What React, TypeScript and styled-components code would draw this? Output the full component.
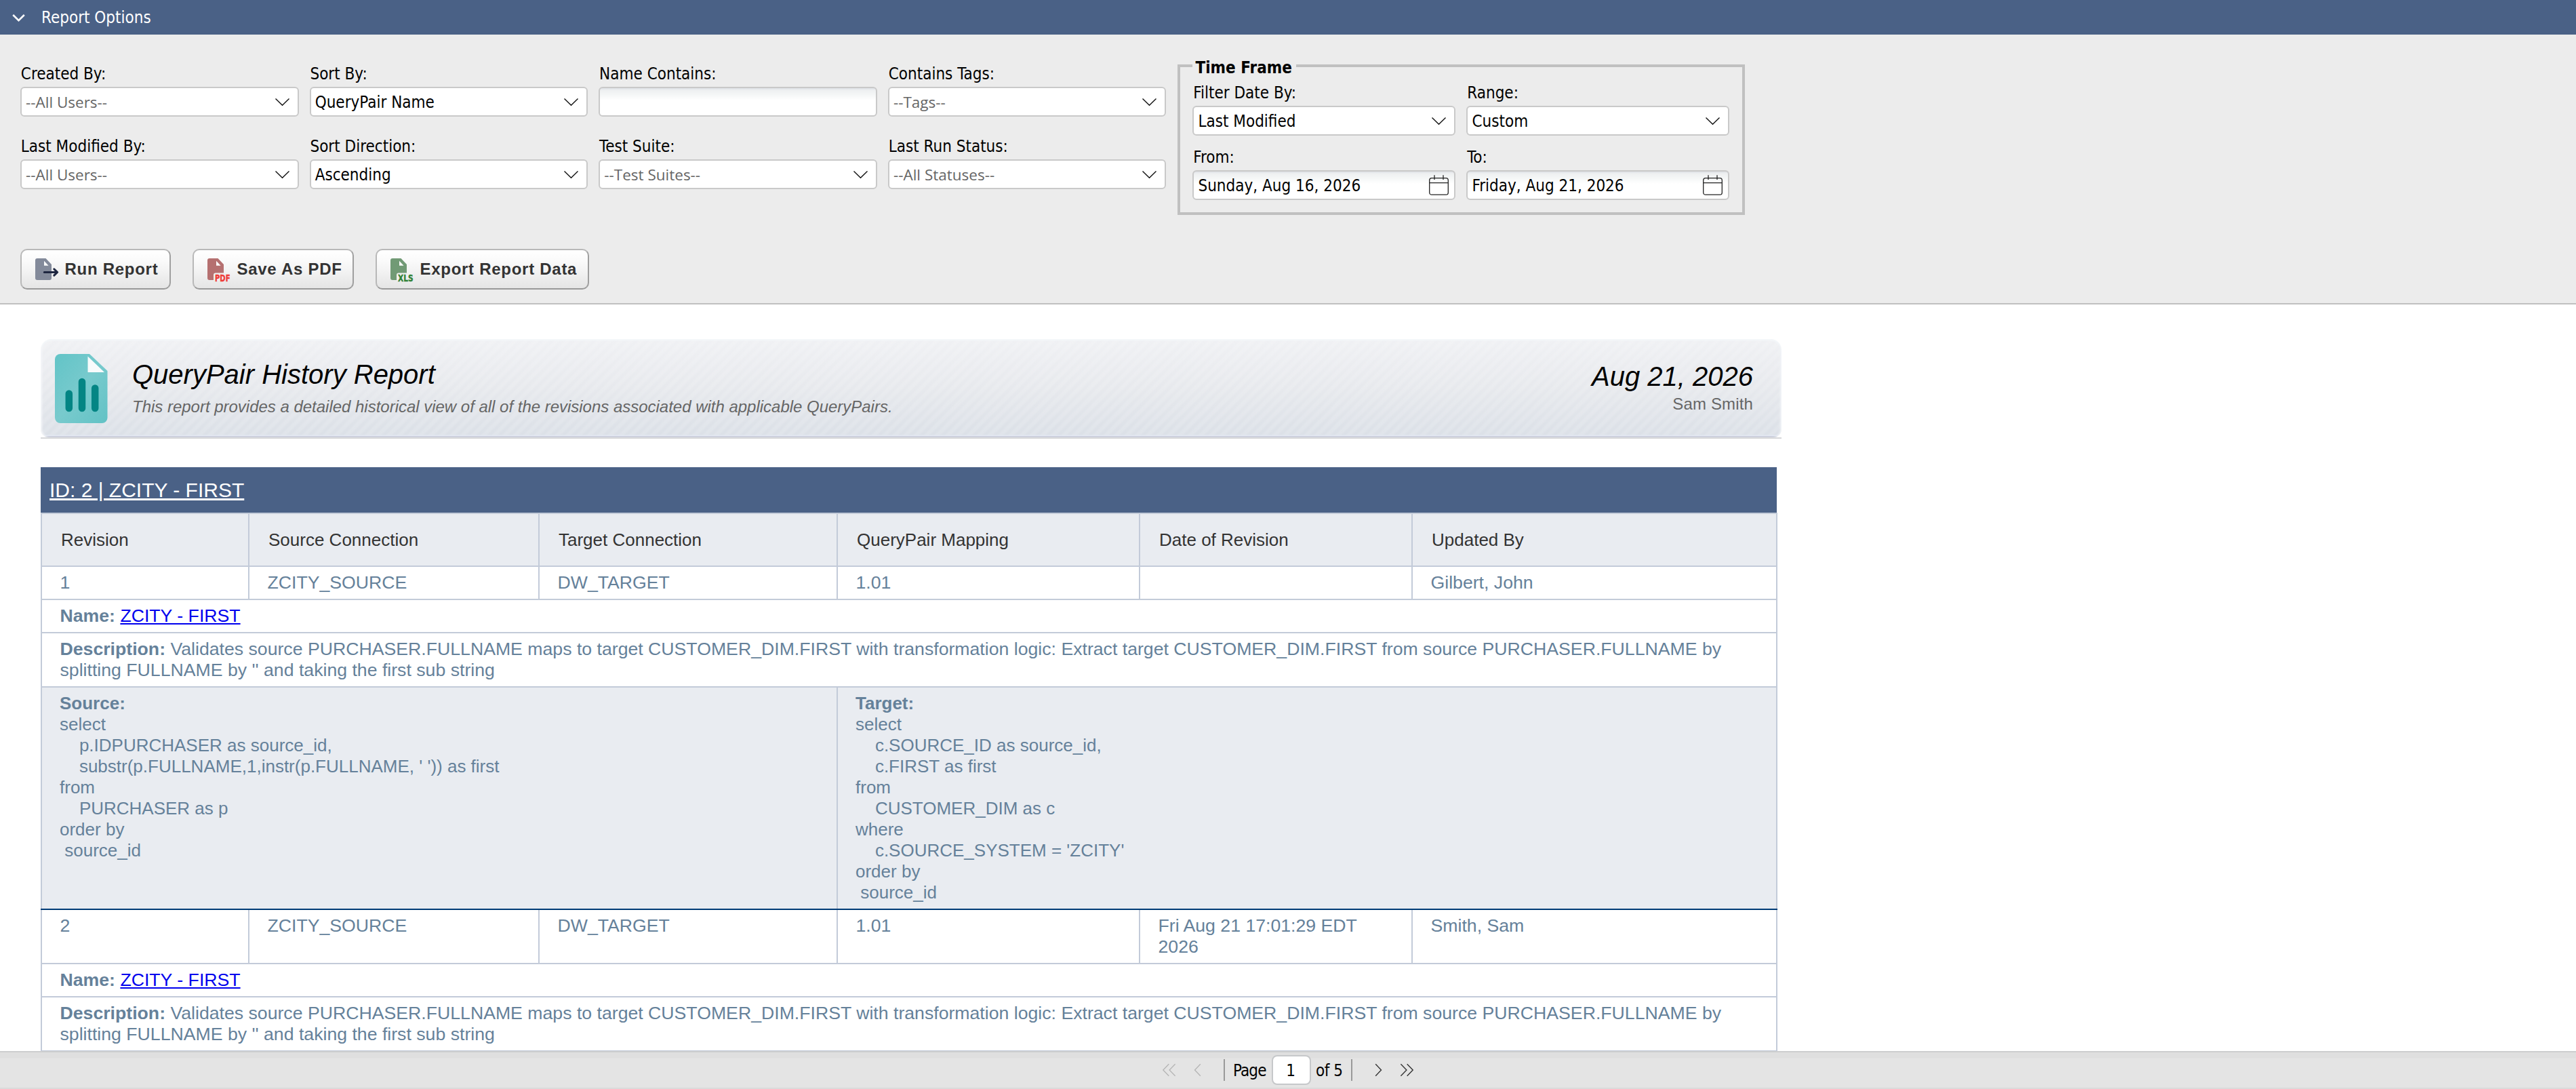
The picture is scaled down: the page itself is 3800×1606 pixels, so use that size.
import React from 'react';
import styled, { createGlobalStyle, css } from 'styled-components';

const ui = `"DejaVu Sans Condensed", "DejaVu Sans", "Noto Sans", sans-serif`;
const doc = `"Liberation Sans", Arial, sans-serif`;
const navy = '#4a6186';
const line = '#c3cbd9';

const GlobalStyle = createGlobalStyle`
  *, *::before, *::after { box-sizing: border-box; }
  body { margin: 0; background: #fff; }
`;

const Page = styled.div`
  width: 3800px;
  height: 1606px;
  display: flex;
  flex-direction: column;
  overflow: hidden;
  background: #fff;
  font: 24px/28px ${ui};
  color: #000;
`;

/* ---------- options panel ---------- */

const PanelHeader = styled.header`
  height: 51px;
  flex: none;
  display: flex;
  align-items: center;
  gap: 23px;
  padding: 1px 0 0 18px;
  background: ${navy};
  color: #fff;
`;

const Panel = styled.section`
  height: 398px;
  flex: none;
  padding: 44px 30px 0;
  background: #ececec;
  border-bottom: 2px solid #c0c0c0;
`;

const Filters = styled.div`
  display: flex;
  align-items: flex-start;
  gap: 17px;
`;

const FieldGrid = styled.div<{ $cols: number; $width: number; $gap: string }>`
  display: grid;
  grid-template-columns: repeat(${(p) => p.$cols}, ${(p) => p.$width}px);
  gap: ${(p) => p.$gap};
`;

const FieldBox = styled.div`
  display: flex;
  flex-direction: column;
  gap: 5px;
`;

const Label = styled.label`
  height: 28px;
  padding-left: 0.8px;
  white-space: nowrap;
`;

const Control = styled.div<{ $shaded?: boolean; $icon?: 'calendar' }>`
  height: 44px;
  display: flex;
  align-items: center;
  justify-content: space-between;
  padding: 0 ${(p) => (p.$icon ? 8 : 12)}px 0 6px;
  border: 2px solid #c9c9c9;
  border-radius: 6px;
  background: #fff;
  ${(p) =>
    p.$shaded &&
    css`
      background: linear-gradient(#dde0e5 0, #eef0f1 3px, #f5f7f7 10px, #fff 18px);
    `}
`;

const Value = styled.span`
  padding-top: 2px;
  white-space: nowrap;
`;

const Placeholder = styled(Value)`
  font: 22.5px/28px "Open Sans", "Noto Sans", sans-serif;
  color: #666;
`;

const TimeFrame = styled.fieldset`
  width: 837px;
  margin: -15px 0 0;
  padding: 9px 18px 18px;
  border: 4px solid #c0c0c0;
`;

const Legend = styled.legend`
  padding: 6px 6px 0 4px;
  font-weight: bold;
`;

const Buttons = styled.div`
  display: flex;
  gap: 32px;
  margin-top: 50px;
`;

const Button = styled.button<{ $width: number }>`
  width: ${(p) => p.$width}px;
  height: 60px;
  display: flex;
  align-items: center;
  gap: 5.5px;
  padding: 0 0 0 18px;
  border: 2px solid;
  border-color: #b8b8b8 #9f9f9f #999 #b8b8b8;
  border-radius: 10px;
  background: linear-gradient(#fff, #fafafa 30%, #e5e5e5);
  font: bold 24px/28px ${doc};
  letter-spacing: 0.72px;
  color: #333;
  white-space: nowrap;
`;

const Svg = styled.svg`
  display: block;
  flex: none;
  overflow: visible;
`;

/* ---------- report ---------- */

const Report = styled.main`
  flex: 1;
  min-height: 0;
  overflow: hidden;
  padding: 51px 0 0 60px;
  font-family: ${doc};
`;

const BannerFrame = styled.div`
  width: 2568px;
  border-bottom: 2px solid #d6d7d9;
`;

const Banner = styled.div`
  height: 145px;
  display: flex;
  padding-right: 42px;
  border-radius: 16px 16px 12px 12px;
  background:
    linear-gradient(transparent 141px, #e4e9f3 142px, #e4e9f3 143px, #c6cad8 143.5px),
    repeating-linear-gradient(135deg, rgba(255, 255, 255, 0.13) 0 3px, rgba(255, 255, 255, 0) 6px 8px, rgba(255, 255, 255, 0.13) 11px),
    linear-gradient(#f0f1f4, #e7e9ed 50%, #dbe0e7);
  box-shadow: inset 0 2px 2px #f4f8fa, inset 3px 0 3px -1px #f5f6f9, inset -3px 0 3px -1px #f0f3f7;
`;

const ReportIcon = styled(Svg)`
  margin: 21px 36px 0 20px;
`;

const BannerText = styled.div`
  flex: 1;
  padding-top: 29px;
  font-style: italic;
`;

const BannerSide = styled.div`
  padding-top: 32px;
  text-align: right;
`;

const BannerTitle = styled.div`
  font: italic 40px/46px ${doc};
`;

const BannerNote = styled.div<{ $gap: number; $tight?: boolean }>`
  margin-top: ${(p) => p.$gap}px;
  font-size: 24px;
  line-height: 28px;
  letter-spacing: ${(p) => (p.$tight ? '-0.015px' : '0.15px')};
  color: #666;
`;

const Table = styled.div`
  width: 2562px;
  margin-top: 42px;
  color: #65819a;
  font: 26.667px/31px ${doc};
`;

const TableTitle = styled.div`
  height: 67px;
  display: flex;
  align-items: center;
  padding-left: 13px;
  margin-right: 1px;
  background: ${navy};
  color: #fff;
  font-size: 30px;
  line-height: 34px;

  span {
    text-decoration: underline;
    text-decoration-thickness: 3px;
    text-underline-offset: 2px;
  }
`;

const TableBody = styled.div`
  border: solid ${line};
  border-width: 2px 2px 0;
`;

const Row = styled.div<{ $head?: boolean; $shaded?: boolean; $last?: boolean }>`
  display: flex;
  border-bottom: 2px solid ${(p) => (p.$last ? '#003b76' : line)};
  ${(p) => p.$shaded && css`background: #e9ecf1;`}
  ${(p) => p.$last && css`margin: 0 -2px; padding: 0 2px; background-clip: content-box; box-shadow: inset 2px 0 ${line}, inset -2px 0 ${line};`}
  ${(p) =>
    p.$head &&
    css`
      height: 78px;
      align-items: stretch;
      background: #e9ecf1;
      color: #333;
      font-size: 26px;
    `}
`;

const Cell = styled.div<{ $width?: number; $head?: boolean; $sql?: boolean }>`
  ${(p) => (p.$width ? css`width: ${p.$width}px; border-right: 2px solid ${line};` : css`flex: 1;`)}
  flex-shrink: 0;
  min-width: 0;
  padding: ${(p) => (p.$head ? '22.5px 26px' : '8px 26px')};
  padding-left: ${(p) => (p.$head ? 28 : p.$sql ? 26 : 26.5)}px;
  ${(p) => p.$sql && css`white-space: pre; font-size: 26px;`}
`;

const Link = styled.a`
  color: #0000ee;
  text-decoration: underline;
  text-decoration-thickness: 2px;
  text-underline-offset: 2px;
`;

/* ---------- pager ---------- */

const Pager = styled.footer`
  height: 56px;
  flex: none;
  display: flex;
  align-items: center;
  justify-content: center;
  border-top: 2px solid #cdcecf;
  border-bottom: 2px solid #dadada;
  background: linear-gradient(#dfdfdf 8px, #e4e4e4 9px);
`;

const PagerIcon = styled(Svg)<{ $gap: number }>`
  margin-left: ${(p) => p.$gap}px;
`;

const Separator = styled.i<{ $gap?: number }>`
  width: 2px;
  height: 32px;
  margin-left: ${(p) => p.$gap ?? 0}px;
  background: #999;
`;

const PagerLabel = styled.span<{ $width: number; $pad: number; $tight: number }>`
  width: ${(p) => p.$width}px;
  padding: 1px 0 0 ${(p) => p.$pad}px;
  letter-spacing: ${(p) => p.$tight}px;
  white-space: nowrap;
`;

const PagerInput = styled.div`
  width: 58px;
  height: 44px;
  padding: 7px 2px 0 0;
  text-align: center;
  border: 2px solid #c6c8ca;
  border-radius: 8px;
  background: #fff;
`;

/* ---------- icons ---------- */

const Chevron = () => (
  <Svg width="21" height="11" viewBox="0 0 21 11" fill="none" stroke="#111" strokeWidth="1.4">
    <path d="M0.5 0.5 L10.5 10.3 L20.5 0.5" />
  </Svg>
);

const Calendar = () => (
  <Svg width="29" height="30" viewBox="0 0 29 30" fill="none" stroke="#222" strokeWidth="1.3">
    <rect x="0.7" y="4.6" width="27.6" height="24.6" rx="3.2" />
    <path d="M0.7 11.6H28.3M8 0.3V7M21 0.3V7" />
  </Svg>
);

const Sheet = ({ color }: { color: string }) => (
  <>
    <path fill={color} d="M5 4H17.5L26 13V33a3 3 0 0 1-3 3H5a3 3 0 0 1-3-3V7a3 3 0 0 1 3-3z" />
    <path fill="#fbfbfb" d="M15 7.8V14.8H21.6z" />
  </>
);

const RunIcon = () => (
  <Svg width="40" height="40" viewBox="0 0 40 40">
    <Sheet color="#838a9a" />
    <path d="M15.3 24.5H34.5M29.8 19.8L34.7 24.5L29.8 29.2" fill="none" stroke="#1e2640" strokeWidth="3" strokeLinecap="round" strokeLinejoin="round" />
  </Svg>
);

const FormatIcon = ({ sheet, ink, label }: { sheet: string; ink: string; label: string }) => (
  <Svg width="40" height="40" viewBox="0 0 40 40">
    <Sheet color={sheet} />
    <path d="M11 37V28.5a3 3 0 0 1 3-3H27V37z" fill="#f0f0f0" />
    <text x="13" y="38" textLength="22.5" lengthAdjust="spacingAndGlyphs" fontFamily={ui} fontWeight="bold" fontSize="13.8" letterSpacing="0" fill={ink} stroke={ink} strokeWidth="0.4">
      {label}
    </text>
  </Svg>
);

const ChartSheet = () => (
  <ReportIcon width="79" height="104" viewBox="0 0 79 104">
    <defs>
      <linearGradient id="teal" x1="0" y1="0" x2="1" y2="1">
        <stop offset="0" stopColor="#62c4c7" />
        <stop offset="0.5" stopColor="#78cacd" />
        <stop offset="1" stopColor="#62c2c5" />
      </linearGradient>
    </defs>
    <path fill="url(#teal)" d="M9 1H52L78.5 26V95a8 8 0 0 1-8 8H9a8 8 0 0 1-8-8V9a8 8 0 0 1 8-8z" />
    <path fill="#f8fbfc" d="M49.5 4.5V28H74z" />
    <g stroke="#048584" strokeWidth="10.5" strokeLinecap="round">
      <path d="M21.8 59.5V81M41 42V81M60.2 51.5V81" />
    </g>
  </ReportIcon>
);

/* ---------- pieces ---------- */

type FieldProps = { label: string; value?: string; placeholder?: string; kind?: 'select' | 'text' | 'date' };

const Field = ({ label, value, placeholder, kind = 'select' }: FieldProps) => (
  <FieldBox>
    <Label>{label}</Label>
    <Control $shaded={kind !== 'select'} $icon={kind === 'date' ? 'calendar' : undefined}>
      {placeholder ? <Placeholder>{placeholder}</Placeholder> : <Value>{value}</Value>}
      {kind === 'select' && <Chevron />}
      {kind === 'date' && <Calendar />}
    </Control>
  </FieldBox>
);

const fields: FieldProps[] = [
  { label: 'Created By:', placeholder: '--All Users--' },
  { label: 'Sort By:', value: 'QueryPair Name' },
  { label: 'Name Contains:', kind: 'text' },
  { label: 'Contains Tags:', placeholder: '--Tags--' },
  { label: 'Last Modified By:', placeholder: '--All Users--' },
  { label: 'Sort Direction:', value: 'Ascending' },
  { label: 'Test Suite:', placeholder: '--Test Suites--' },
  { label: 'Last Run Status:', placeholder: '--All Statuses--' },
];

const dateFields: FieldProps[] = [
  { label: 'Filter Date By:', value: 'Last Modified' },
  { label: 'Range:', value: 'Custom' },
  { label: 'From:', value: 'Sunday, Aug 16, 2026', kind: 'date' },
  { label: 'To:', value: 'Friday, Aug 21, 2026', kind: 'date' },
];

const widths: (number | undefined)[] = [306, 428, 440, 446, 402, undefined];
const heads = ['Revision', 'Source Connection', 'Target Connection', 'QueryPair Mapping', 'Date of Revision', 'Updated By'];

const sourceSql = `select
    p.IDPURCHASER as source_id,
    substr(p.FULLNAME,1,instr(p.FULLNAME, ' ')) as first
from
    PURCHASER as p
order by
 source_id`;

const targetSql = `select
    c.SOURCE_ID as source_id,
    c.FIRST as first
from
    CUSTOMER_DIM as c
where
    c.SOURCE_SYSTEM = 'ZCITY'
order by
 source_id`;

const description =
  "Validates source PURCHASER.FULLNAME maps to target CUSTOMER_DIM.FIRST with transformation logic: Extract target CUSTOMER_DIM.FIRST from source PURCHASER.FULLNAME by splitting FULLNAME by '' and taking the first sub string";

const Revision = ({ cells }: { cells: string[] }) => (
  <>
    <Row>
      {cells.map((c, i) => (
        <Cell key={i} $width={widths[i]}>{c}</Cell>
      ))}
    </Row>
    <Row>
      <Cell>
        <b>Name:</b> <Link>ZCITY - FIRST</Link>
      </Cell>
    </Row>
    <Row>
      <Cell>
        <b>Description:</b> {description}
      </Cell>
    </Row>
  </>
);

export default function App() {
  return (
    <Page>
      <GlobalStyle />
      <PanelHeader>
        <Svg width="20" height="11" viewBox="0 0 20 11" fill="none" stroke="#fff" strokeWidth="2.6">
          <path d="M1.2 1 L9.5 9.2 L17.8 1" />
        </Svg>
        <span>Report Options</span>
      </PanelHeader>

      <Panel>
        <Filters>
          <FieldGrid $cols={4} $width={410.5} $gap="30px 16.17px">
            {fields.map((f) => <Field key={f.label} {...f} />)}
          </FieldGrid>
          <TimeFrame>
            <Legend>Time Frame</Legend>
            <FieldGrid $cols={2} $width={388} $gap="18px 16px">
              {dateFields.map((f) => <Field key={f.label} {...f} />)}
            </FieldGrid>
          </TimeFrame>
        </Filters>
        <Buttons>
          <Button $width={222}><RunIcon />Run Report</Button>
          <Button $width={238}><FormatIcon sheet="#b57070" ink="#ee3b38" label="PDF" />Save As PDF</Button>
          <Button $width={315}><FormatIcon sheet="#719a75" ink="#2f8136" label="XLS" />Export Report Data</Button>
        </Buttons>
      </Panel>

      <Report>
        <BannerFrame>
          <Banner>
            <ChartSheet />
            <BannerText>
              <BannerTitle>QueryPair History Report</BannerTitle>
              <BannerNote $gap={10.5} $tight>
                This report provides a detailed historical view of all of the revisions associated with applicable QueryPairs.
              </BannerNote>
            </BannerText>
            <BannerSide>
              <BannerTitle>Aug 21, 2026</BannerTitle>
              <BannerNote $gap={4}>Sam Smith</BannerNote>
            </BannerSide>
          </Banner>
        </BannerFrame>

        <Table>
          <TableTitle><span>ID: 2 | ZCITY - FIRST</span></TableTitle>
          <TableBody>
            <Row $head>
              {heads.map((h, i) => (
                <Cell key={h} $head $width={widths[i]}>{h}</Cell>
              ))}
            </Row>
            <Revision cells={['1', 'ZCITY_SOURCE', 'DW_TARGET', '1.01', '', 'Gilbert, John']} />
            <Row $shaded $last>
              <Cell $sql $width={1174}>
                <b>Source:</b>{'\n' + sourceSql}
              </Cell>
              <Cell $sql>
                <b>Target:</b>{'\n' + targetSql}
              </Cell>
            </Row>
            <Revision cells={['2', 'ZCITY_SOURCE', 'DW_TARGET', '1.01', 'Fri Aug 21 17:01:29 EDT 2026', 'Smith, Sam']} />
          </TableBody>
        </Table>
      </Report>

      <Pager>
        <PagerIcon $gap={0} width="19" height="18" viewBox="0 0 19 18" fill="none" stroke="#b4b4b4" strokeWidth="1.3">
          <path d="M9.3 0.3L0.8 9L9.3 17.7M18.6 0.3L10.1 9L18.6 17.7" />
        </PagerIcon>
        <PagerIcon $gap={28} width="9" height="18" viewBox="0 0 9 18" fill="none" stroke="#b4b4b4" strokeWidth="1.3">
          <path d="M8.8 0.3L0.5 9L8.8 17.7" />
        </PagerIcon>
        <Separator $gap={34} />
        <PagerLabel $width={69} $pad={12} $tight={-0.9}>Page</PagerLabel>
        <PagerInput>1</PagerInput>
        <PagerLabel $width={59} $pad={7} $tight={-0.5}>of 5</PagerLabel>
        <Separator />
        <PagerIcon $gap={34} width="9" height="18" viewBox="0 0 9 18" fill="none" stroke="#333" strokeWidth="1.4">
          <path d="M0.2 0.3L8.5 9L0.2 17.7" />
        </PagerIcon>
        <PagerIcon $gap={28} width="19" height="18" viewBox="0 0 19 18" fill="none" stroke="#333" strokeWidth="1.4">
          <path d="M0.4 0.3L8.9 9L0.4 17.7M9.7 0.3L18.2 9L9.7 17.7" />
        </PagerIcon>
      </Pager>
    </Page>
  );
}
